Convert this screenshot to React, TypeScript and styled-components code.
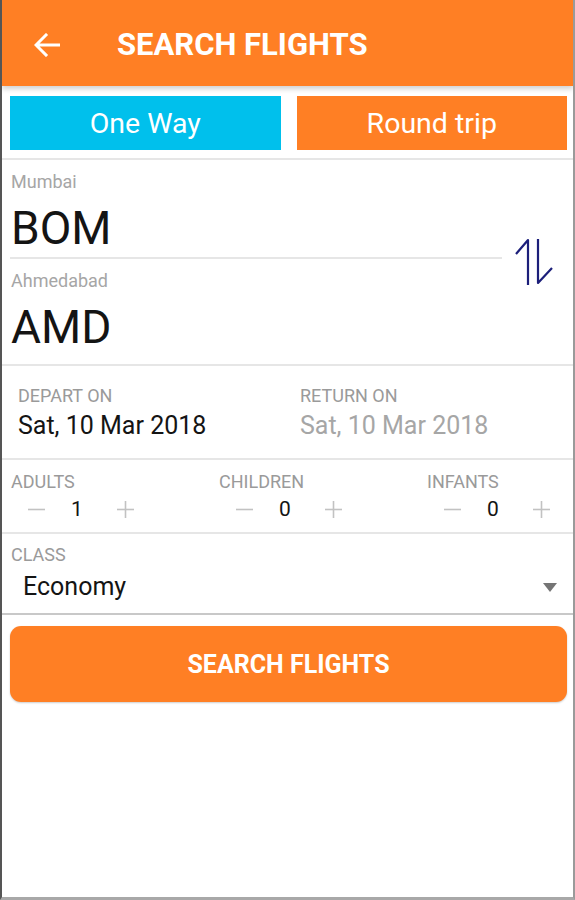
import styled, { createGlobalStyle } from "styled-components";

const COLORS = {
    ORANGE: "#FF7F24",
    CYAN: "#00C0EC",
    LABEL: "#9A9A9A",
    TEXT: "#141414",
    DIVIDER: "#E6E6E6",
    NAVY: "#1C1F7A",
};

const GlobalStyle = createGlobalStyle`
    html, body {
        margin: 0;
        padding: 0;
        background: #ffffff;
    }
    body {
        font-family: Roboto, "Liberation Sans", Arial, sans-serif;
    }
`;

const Sframe = styled.div`
    width: 575px;
    height: 900px;
    box-sizing: border-box;
    border-left: 2px solid #555555;
    border-right: 2px solid #9a9a9a;
    border-bottom: 3px solid #a8a8a8;
    background: #ffffff;
    display: flex;
    flex-direction: column;
    overflow: hidden;
`;
const Sheader = styled.header`
    height: 86px;
    box-sizing: border-box;
    padding-top: 3px;
    flex-shrink: 0;
    background-color: ${COLORS.ORANGE};
    display: flex;
    align-items: center;
    box-shadow: 0 3px 5px rgba(0, 0, 0, 0.18);
    position: relative;
    z-index: 1;
`;
const SbackButton = styled.div`
    width: 28px;
    height: 28px;
    margin-left: 31px;
    margin-right: 56px;
    display: flex;
    align-items: center;
    justify-content: center;
`;
const Stitle = styled.h1`
    margin: 0;
    color: #ffffff;
    font-size: 31px;
    font-weight: 700;
`;
const StabRow = styled.div`
    display: flex;
    gap: 16px;
    padding: 10px 6px 8px 8px;
    border-bottom: 2px solid ${COLORS.DIVIDER};
`;
const Stab = styled.div<{ $bg: string }>`
    flex: 1;
    height: 54px;
    background-color: ${(p) => p.$bg};
    color: #ffffff;
    font-size: 28.5px;
    display: flex;
    align-items: center;
    justify-content: center;
`;
const Ssection = styled.section<{ $padTop: number; $padBottom: number; $padLeft: number; $border?: string }>`
    padding: ${(p) => `${p.$padTop}px 6px ${p.$padBottom}px ${p.$padLeft}px`};
    border-bottom: 2px solid ${(p) => p.$border ?? COLORS.DIVIDER};
`;
const SrouteSection = styled.section`
    display: flex;
    border-bottom: 2px solid ${COLORS.DIVIDER};
`;
const SrouteColumn = styled.div`
    width: 492px;
    margin-left: 8px;
    padding: 13px 0 13px 1px;
    box-sizing: border-box;
`;
const SswapBox = styled.div`
    flex: 1;
    display: flex;
    align-items: center;
    justify-content: center;
    padding-right: 10px;
`;
const Slabel = styled.div<{ $light?: boolean }>`
    font-size: 18px;
    line-height: 18px;
    color: ${(p) => (p.$light ? "#A6A6A6" : COLORS.LABEL)};
`;
const Scode = styled.div`
    margin-top: 13px;
    font-size: 46px;
    line-height: 48px;
    color: ${COLORS.TEXT};
`;
const SrouteLine = styled.div`
    height: 2px;
    background: ${COLORS.DIVIDER};
    margin: 5px 0 13px -1px;
`;
const SdateGrid = styled.div`
    display: grid;
    grid-template-columns: 282px 1fr;
`;
const Svalue = styled.div<{ $muted?: boolean; $indent?: number }>`
    font-size: 25px;
    line-height: 26px;
    color: ${(p) => (p.$muted ? "#A6A6A6" : COLORS.TEXT)};
    padding-left: ${(p) => p.$indent ?? 0}px;
`;
const SdateValue = styled(Svalue)`
    margin-top: 8px;
`;
const SpaxGrid = styled.div`
    display: grid;
    grid-template-columns: repeat(3, 208px);
`;
const Scounter = styled.div`
    display: flex;
    align-items: center;
    height: 22px;
    margin-top: 7px;
    padding-left: 17px;
`;
const Scount = styled.div`
    width: 64px;
    text-align: center;
    font-size: 21px;
    color: ${COLORS.TEXT};
`;
const SstepIcon = styled.svg<{ $gap?: number }>`
    width: 17px;
    height: 17px;
    margin-left: ${(p) => p.$gap ?? 0}px;
`;
const SselectRow = styled.div`
    display: flex;
    align-items: center;
    justify-content: space-between;
    margin-top: 10px;
    padding-right: 10px;
`;
const SsearchButton = styled.button`
    margin: 11px 6px 0 8px;
    height: 76px;
    border: none;
    border-radius: 11px;
    background-color: ${COLORS.ORANGE};
    color: #ffffff;
    font-family: Roboto, "Liberation Sans", Arial, sans-serif;
    font-size: 25px;
    font-weight: 700;
    box-shadow: 0 1px 2px rgba(0, 0, 0, 0.2);
`;

const Minus = () => (
    <SstepIcon viewBox="0 0 17 17">
        <line x1="0" y1="8.5" x2="17" y2="8.5" stroke="#C2C2C2" strokeWidth="1.6" />
    </SstepIcon>
);
const Plus = () => (
    <SstepIcon viewBox="0 0 17 17" $gap={8}>
        <line x1="0" y1="8.5" x2="17" y2="8.5" stroke="#C2C2C2" strokeWidth="1.6" />
        <line x1="8.5" y1="0" x2="8.5" y2="17" stroke="#C2C2C2" strokeWidth="1.6" />
    </SstepIcon>
);

const PaxCounter = ({ title, count }: { title: string; count: number }) => (
    <div>
        <Slabel>{title}</Slabel>
        <Scounter>
            <Minus />
            <Scount>{count}</Scount>
            <Plus />
        </Scounter>
    </div>
);

const App = () => {
    return (
        <>
            <GlobalStyle />
            <Sframe>
                <Sheader>
                    <SbackButton>
                        <svg width="26" height="24" viewBox="0 0 26 24">
                            <path d="M25 12 H3 M12 2 L2 12 L12 22" fill="none" stroke="#ffffff" strokeWidth="3" strokeLinecap="square" />
                        </svg>
                    </SbackButton>
                    <Stitle>SEARCH FLIGHTS</Stitle>
                </Sheader>

                <StabRow>
                    <Stab $bg={COLORS.CYAN}>One Way</Stab>
                    <Stab $bg={COLORS.ORANGE}>Round trip</Stab>
                </StabRow>

                <SrouteSection>
                    <SrouteColumn>
                        <Slabel $light>Mumbai</Slabel>
                        <Scode>BOM</Scode>
                        <SrouteLine />
                        <Slabel $light>Ahmedabad</Slabel>
                        <Scode>AMD</Scode>
                    </SrouteColumn>
                    <SswapBox>
                        <svg width="44" height="50" viewBox="0 0 44 50">
                            <path d="M17 48 V3 L5 17" fill="none" stroke={COLORS.NAVY} strokeWidth="2.2" strokeLinejoin="round" />
                            <path d="M27 2 V46 L41 31" fill="none" stroke={COLORS.NAVY} strokeWidth="2.2" strokeLinejoin="round" />
                        </svg>
                    </SswapBox>
                </SrouteSection>

                <Ssection $padTop={21} $padBottom={19} $padLeft={16}>
                    <SdateGrid>
                        <div>
                            <Slabel>DEPART ON</Slabel>
                            <SdateValue>Sat, 10 Mar 2018</SdateValue>
                        </div>
                        <div>
                            <Slabel>RETURN ON</Slabel>
                            <SdateValue $muted>Sat, 10 Mar 2018</SdateValue>
                        </div>
                    </SdateGrid>
                </Ssection>

                <Ssection $padTop={13} $padBottom={12} $padLeft={9}>
                    <SpaxGrid>
                        <PaxCounter title="ADULTS" count={1} />
                        <PaxCounter title="CHILDREN" count={0} />
                        <PaxCounter title="INFANTS" count={0} />
                    </SpaxGrid>
                </Ssection>

                <Ssection $padTop={12} $padBottom={13} $padLeft={9} $border="#C8C8C8">
                    <Slabel>CLASS</Slabel>
                    <SselectRow>
                        <Svalue $indent={12}>Economy</Svalue>
                        <svg width="14" height="9" viewBox="0 0 14 9">
                            <polygon points="0,0 14,0 7,9" fill="#757575" />
                        </svg>
                    </SselectRow>
                </Ssection>

                <SsearchButton>SEARCH FLIGHTS</SsearchButton>
            </Sframe>
        </>
    );
};

export default App;
